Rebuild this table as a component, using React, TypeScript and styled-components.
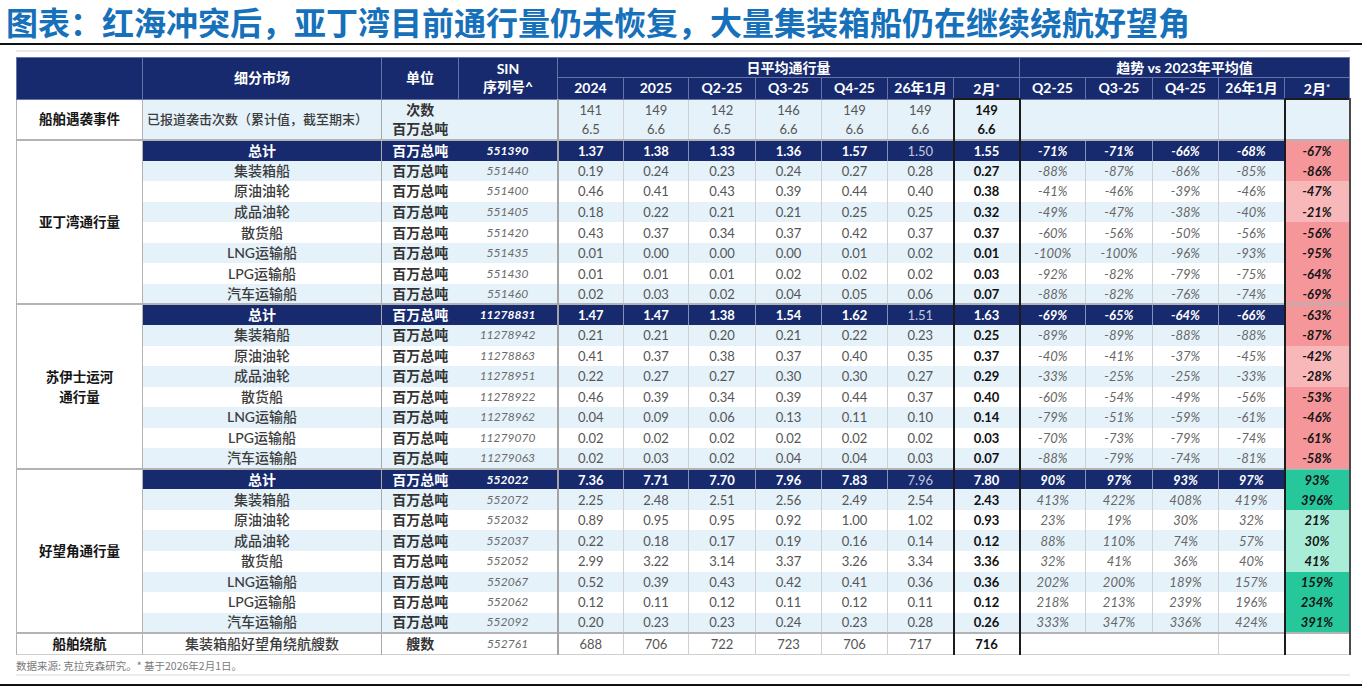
import React from 'react';
import styled, { createGlobalStyle, css } from 'styled-components';

const NAVY = '#172a6e';
const STRIPE = '#e5f2fa';
const BOX = '#1c1c1c';

const GlobalStyle = createGlobalStyle`
  html, body { margin: 0; padding: 0; background: #fff; }
  body {
    width: 1362px;
    height: 686px;
    overflow: hidden;
    font-family: Lato, "Noto Sans CJK SC", sans-serif;
  }
`;

const Page = styled.div`
  width: 1362px;
  height: 686px;
  display: flex;
  flex-direction: column;
`;

const Title = styled.h1`
  margin: 0;
  padding-left: 6px;
  height: 43px;
  font-family: "Noto Sans CJK SC", sans-serif;
  font-weight: 700;
  font-size: 32px;
  line-height: 42px;
  color: #1670ba;
  white-space: nowrap;
`;

const BlackRule = styled.div`
  height: 2px;
  background: #111;
  flex: none;
`;

const Body = styled.div`
  flex: 1;
  padding: 5px 0 0 16px;
  display: flex;
  flex-direction: column;
`;

const GrayLine = styled.div`
  width: 1334px;
  height: 2px;
  background: #e9e9e9;
`;

const Table = styled.table`
  margin-top: 5px;
  width: 1333px;
  border-collapse: collapse;
  table-layout: fixed;
  border-bottom: 1px solid #cfcfcf;
`;

const Col = styled.col<{ $w: number }>`
  width: ${p => p.$w}px;
`;

const HeadRow = styled.tr<{ $h: number }>`
  height: ${p => p.$h}px;
`;

const Th = styled.th`
  background: ${NAVY};
  color: #fff;
  font-weight: 700;
  font-size: 14px;
  line-height: 18px;
  padding: 0;
  border: 1px solid #6574a8;
  text-align: center;
  white-space: nowrap;
  overflow: hidden;
`;

const Star = styled.span`
  font-size: 10px;
  vertical-align: 3px;
`;

type RowKind = 'stripe' | 'plain' | 'total';

const Row = styled.tr<{ $kind: RowKind; $sep?: boolean }>`
  height: 20.56px;
  background: ${p => (p.$kind === 'total' ? NAVY : p.$kind === 'stripe' ? STRIPE : '#fff')};
  ${p =>
    p.$sep &&
    css`
      & > td {
        border-top: 2px solid #b3b3b3;
      }
    `}
`;

const Td = styled.td`
  padding: 0;
  font-size: 13px;
  line-height: 18px;
  text-align: center;
  white-space: nowrap;
  overflow: hidden;
`;

const CatCell = styled(Td)`
  background: #fff;
  color: #151515;
  font-weight: 700;
  font-size: 13.5px;
  line-height: 20px;
  border-left: 1px solid #b3b3b3;
  border-right: 1px solid #b3b3b3;
`;

const NameCell = styled(Td)<{ $total?: boolean; $left?: boolean }>`
  font-size: ${p => (p.$left ? '13px' : '14px')};
  font-weight: ${p => (p.$total ? 700 : 500)};
  color: ${p => (p.$total ? '#fff' : '#3c3c3c')};
  text-align: ${p => (p.$left ? 'left' : 'center')};
  padding-left: ${p => (p.$left ? '4px' : '0')};
  border-right: 1px solid #a9a9a9;
`;

const UnitCell = styled(Td)<{ $total?: boolean }>`
  font-size: 14px;
  font-weight: 700;
  color: ${p => (p.$total ? '#fff' : '#333')};
`;

const SinCell = styled(Td)<{ $total?: boolean }>`
  font-size: 12px;
  font-style: italic;
  font-weight: ${p => (p.$total ? 700 : 400)};
  color: ${p => (p.$total ? '#fff' : '#6a6a6a')};
  border-right: 2px solid #a3a3a3;
`;

type Tone = 'normal' | 'total' | 'dim';

const NumCell = styled(Td)<{ $tone: Tone }>`
  font-weight: ${p => (p.$tone === 'total' ? 700 : 400)};
  color: ${p => (p.$tone === 'total' ? '#fff' : p.$tone === 'dim' ? '#c3c8de' : '#555')};
  border-right: 1px solid ${p => (p.$tone === 'normal' ? '#cfcfcf' : '#8790b6')};
`;

const FebCell = styled(Td)<{ $total?: boolean; $first?: boolean }>`
  font-weight: 700;
  color: ${p => (p.$total ? '#fff' : '#111')};
  border-left: 2px solid ${BOX};
  border-right: 2px solid ${BOX};
  ${p => p.$first && `border-top: 2px solid ${BOX};`}
`;

const TrendCell = styled(Td)<{ $total?: boolean }>`
  font-style: italic;
  font-weight: ${p => (p.$total ? 700 : 400)};
  color: ${p => (p.$total ? '#fff' : '#666')};
  border-right: 1px solid ${p => (p.$total ? '#8790b6' : '#cfcfcf')};
`;

const FebTrendCell = styled(Td)<{ $fill?: string; $first?: boolean }>`
  ${p => p.$fill && `background: ${p.$fill};`}
  font-style: italic;
  font-weight: 700;
  color: #141414;
  border-left: 2px solid ${BOX};
  border-right: 2px solid #4a4a4a;
  ${p => p.$first && `border-top: 2px solid ${BOX};`}
`;

const Footnote = styled.div`
  margin-top: 4px;
  height: 14px;
  font-family: "Noto Sans CJK SC", sans-serif;
  font-size: 10.5px;
  line-height: 14px;
  color: #7a7a7a;
`;

const BottomGray = styled.div`
  margin-top: 1px;
  width: 1334px;
  height: 2px;
  background: #ececec;
`;

const FILL: Record<string, string> = {
  rs: '#f4969a',
  rl: '#f8b8ba',
  gs: '#27c79c',
  gl: '#a9ecd7',
};

const NAMES = ['总计', '集装箱船', '原油油轮', '成品油轮', '散货船', 'LNG运输船', 'LPG运输船', '汽车运输船'];

type Sec = {
  cat: React.ReactNode;
  sins: string[];
  vals: string[][];
  trends: string[][];
  fills: string[];
};

const SECTIONS: Sec[] = [
  {
    cat: '亚丁湾通行量',
    sins: ['551390', '551440', '551400', '551405', '551420', '551435', '551430', '551460'],
    vals: [
      ['1.37', '1.38', '1.33', '1.36', '1.57', '1.50', '1.55'],
      ['0.19', '0.24', '0.23', '0.24', '0.27', '0.28', '0.27'],
      ['0.46', '0.41', '0.43', '0.39', '0.44', '0.40', '0.38'],
      ['0.18', '0.22', '0.21', '0.21', '0.25', '0.25', '0.32'],
      ['0.43', '0.37', '0.34', '0.37', '0.42', '0.37', '0.37'],
      ['0.01', '0.00', '0.00', '0.00', '0.01', '0.02', '0.01'],
      ['0.01', '0.01', '0.01', '0.02', '0.02', '0.02', '0.03'],
      ['0.02', '0.03', '0.02', '0.04', '0.05', '0.06', '0.07'],
    ],
    trends: [
      ['-71%', '-71%', '-66%', '-68%', '-67%'],
      ['-88%', '-87%', '-86%', '-85%', '-86%'],
      ['-41%', '-46%', '-39%', '-46%', '-47%'],
      ['-49%', '-47%', '-38%', '-40%', '-21%'],
      ['-60%', '-56%', '-50%', '-56%', '-56%'],
      ['-100%', '-100%', '-96%', '-93%', '-95%'],
      ['-92%', '-82%', '-79%', '-75%', '-64%'],
      ['-88%', '-82%', '-76%', '-74%', '-69%'],
    ],
    fills: ['rs', 'rs', 'rl', 'rl', 'rs', 'rs', 'rs', 'rs'],
  },
  {
    cat: (
      <>
        苏伊士运河
        <br />
        通行量
      </>
    ),
    sins: ['11278831', '11278942', '11278863', '11278951', '11278922', '11278962', '11279070', '11279063'],
    vals: [
      ['1.47', '1.47', '1.38', '1.54', '1.62', '1.51', '1.63'],
      ['0.21', '0.21', '0.20', '0.21', '0.22', '0.23', '0.25'],
      ['0.41', '0.37', '0.38', '0.37', '0.40', '0.35', '0.37'],
      ['0.22', '0.27', '0.27', '0.30', '0.30', '0.27', '0.29'],
      ['0.46', '0.39', '0.34', '0.39', '0.44', '0.37', '0.40'],
      ['0.04', '0.09', '0.06', '0.13', '0.11', '0.10', '0.14'],
      ['0.02', '0.02', '0.02', '0.02', '0.02', '0.02', '0.03'],
      ['0.02', '0.03', '0.02', '0.04', '0.04', '0.03', '0.07'],
    ],
    trends: [
      ['-69%', '-65%', '-64%', '-66%', '-63%'],
      ['-89%', '-89%', '-88%', '-88%', '-87%'],
      ['-40%', '-41%', '-37%', '-45%', '-42%'],
      ['-33%', '-25%', '-25%', '-33%', '-28%'],
      ['-60%', '-54%', '-49%', '-56%', '-53%'],
      ['-79%', '-51%', '-59%', '-61%', '-46%'],
      ['-70%', '-73%', '-79%', '-74%', '-61%'],
      ['-88%', '-79%', '-74%', '-81%', '-58%'],
    ],
    fills: ['rs', 'rs', 'rl', 'rl', 'rs', 'rs', 'rs', 'rs'],
  },
  {
    cat: '好望角通行量',
    sins: ['552022', '552072', '552032', '552037', '552052', '552067', '552062', '552092'],
    vals: [
      ['7.36', '7.71', '7.70', '7.96', '7.83', '7.96', '7.80'],
      ['2.25', '2.48', '2.51', '2.56', '2.49', '2.54', '2.43'],
      ['0.89', '0.95', '0.95', '0.92', '1.00', '1.02', '0.93'],
      ['0.22', '0.18', '0.17', '0.19', '0.16', '0.14', '0.12'],
      ['2.99', '3.22', '3.14', '3.37', '3.26', '3.34', '3.36'],
      ['0.52', '0.39', '0.43', '0.42', '0.41', '0.36', '0.36'],
      ['0.12', '0.11', '0.12', '0.11', '0.12', '0.11', '0.12'],
      ['0.20', '0.23', '0.23', '0.24', '0.23', '0.28', '0.26'],
    ],
    trends: [
      ['90%', '97%', '93%', '97%', '93%'],
      ['413%', '422%', '408%', '419%', '396%'],
      ['23%', '19%', '30%', '32%', '21%'],
      ['88%', '110%', '74%', '57%', '30%'],
      ['32%', '41%', '36%', '40%', '41%'],
      ['202%', '200%', '189%', '157%', '159%'],
      ['218%', '213%', '239%', '196%', '234%'],
      ['333%', '347%', '336%', '424%', '391%'],
    ],
    fills: ['gs', 'gs', 'gl', 'gl', 'gl', 'gs', 'gs', 'gs'],
  },
];

const WIDTHS = [126, 239, 77, 99, 66, 65, 67, 66, 66, 66, 66, 66, 67, 66, 66, 65];

const ATTACK = [
  { unit: '次数', vals: ['141', '149', '142', '146', '149', '149', '149'] },
  { unit: '百万总吨', vals: ['6.5', '6.6', '6.5', '6.6', '6.6', '6.6', '6.6'] },
];

const DataNums: React.FC<{ vals: string[]; total?: boolean; first?: boolean }> = ({ vals, total, first }) => (
  <>
    {vals.slice(0, 6).map((v, i) => (
      <NumCell key={i} $tone={total ? (i === 5 ? 'dim' : 'total') : 'normal'}>
        {v}
      </NumCell>
    ))}
    <FebCell $total={total} $first={first}>
      {vals[6]}
    </FebCell>
  </>
);

export default function App() {
  return (
    <>
      <GlobalStyle />
      <Page>
        <Title>图表：红海冲突后，亚丁湾目前通行量仍未恢复，大量集装箱船仍在继续绕航好望角</Title>
        <BlackRule />
        <Body>
          <GrayLine />
          <Table>
            <colgroup>
              {WIDTHS.map((w, i) => (
                <Col key={i} $w={w} />
              ))}
            </colgroup>
            <thead>
              <HeadRow $h={20}>
                <Th rowSpan={2}></Th>
                <Th rowSpan={2}>细分市场</Th>
                <Th rowSpan={2}>单位</Th>
                <Th rowSpan={2}>
                  SIN
                  <br />
                  序列号^
                </Th>
                <Th colSpan={7}>日平均通行量</Th>
                <Th colSpan={5}>趋势 vs 2023年平均值</Th>
              </HeadRow>
              <HeadRow $h={20}>
                <Th>2024</Th>
                <Th>2025</Th>
                <Th>Q2-25</Th>
                <Th>Q3-25</Th>
                <Th>Q4-25</Th>
                <Th>26年1月</Th>
                <Th>
                  2月<Star>*</Star>
                </Th>
                <Th>Q2-25</Th>
                <Th>Q3-25</Th>
                <Th>Q4-25</Th>
                <Th>26年1月</Th>
                <Th>
                  2月<Star>*</Star>
                </Th>
              </HeadRow>
            </thead>
            <tbody>
              {ATTACK.map((r, i) => (
                <Row key={`a${i}`} $kind="stripe">
                  {i === 0 && (
                    <>
                      <CatCell rowSpan={2}>船舶遇袭事件</CatCell>
                      <NameCell rowSpan={2} $left>
                        已报道袭击次数（累计值，截至期末）
                      </NameCell>
                    </>
                  )}
                  <UnitCell>{r.unit}</UnitCell>
                  <SinCell />
                  <DataNums vals={r.vals} first={i === 0} />
                  <TrendCell colSpan={3} />
                  <TrendCell />
                  <FebTrendCell $first={i === 0} />
                </Row>
              ))}
              {SECTIONS.map((s, si) =>
                NAMES.map((name, ri) => {
                  const total = ri === 0;
                  const kind: RowKind = total ? 'total' : ri % 2 === 1 ? 'stripe' : 'plain';
                  return (
                    <Row key={`${si}-${ri}`} $kind={kind} $sep={total}>
                      {total && <CatCell rowSpan={8}>{s.cat}</CatCell>}
                      <NameCell $total={total}>{name}</NameCell>
                      <UnitCell $total={total}>百万总吨</UnitCell>
                      <SinCell $total={total}>{s.sins[ri]}</SinCell>
                      <DataNums vals={s.vals[ri]} total={total} />
                      {s.trends[ri].slice(0, 4).map((t, ti) => (
                        <TrendCell key={ti} $total={total}>
                          {t}
                        </TrendCell>
                      ))}
                      <FebTrendCell $fill={FILL[s.fills[ri]]}>{s.trends[ri][4]}</FebTrendCell>
                    </Row>
                  );
                })
              )}
              <Row $kind="plain" $sep>
                <CatCell>船舶绕航</CatCell>
                <NameCell>集装箱船好望角绕航艘数</NameCell>
                <UnitCell>艘数</UnitCell>
                <SinCell>552761</SinCell>
                <DataNums vals={['688', '706', '722', '723', '706', '717', '716']} />
                <TrendCell colSpan={3} />
                <TrendCell />
                <FebTrendCell />
              </Row>
            </tbody>
          </Table>
          <Footnote>数据来源: 克拉克森研究。* 基于2026年2月1日。</Footnote>
          <BottomGray />
        </Body>
        <BlackRule />
      </Page>
    </>
  );
}
